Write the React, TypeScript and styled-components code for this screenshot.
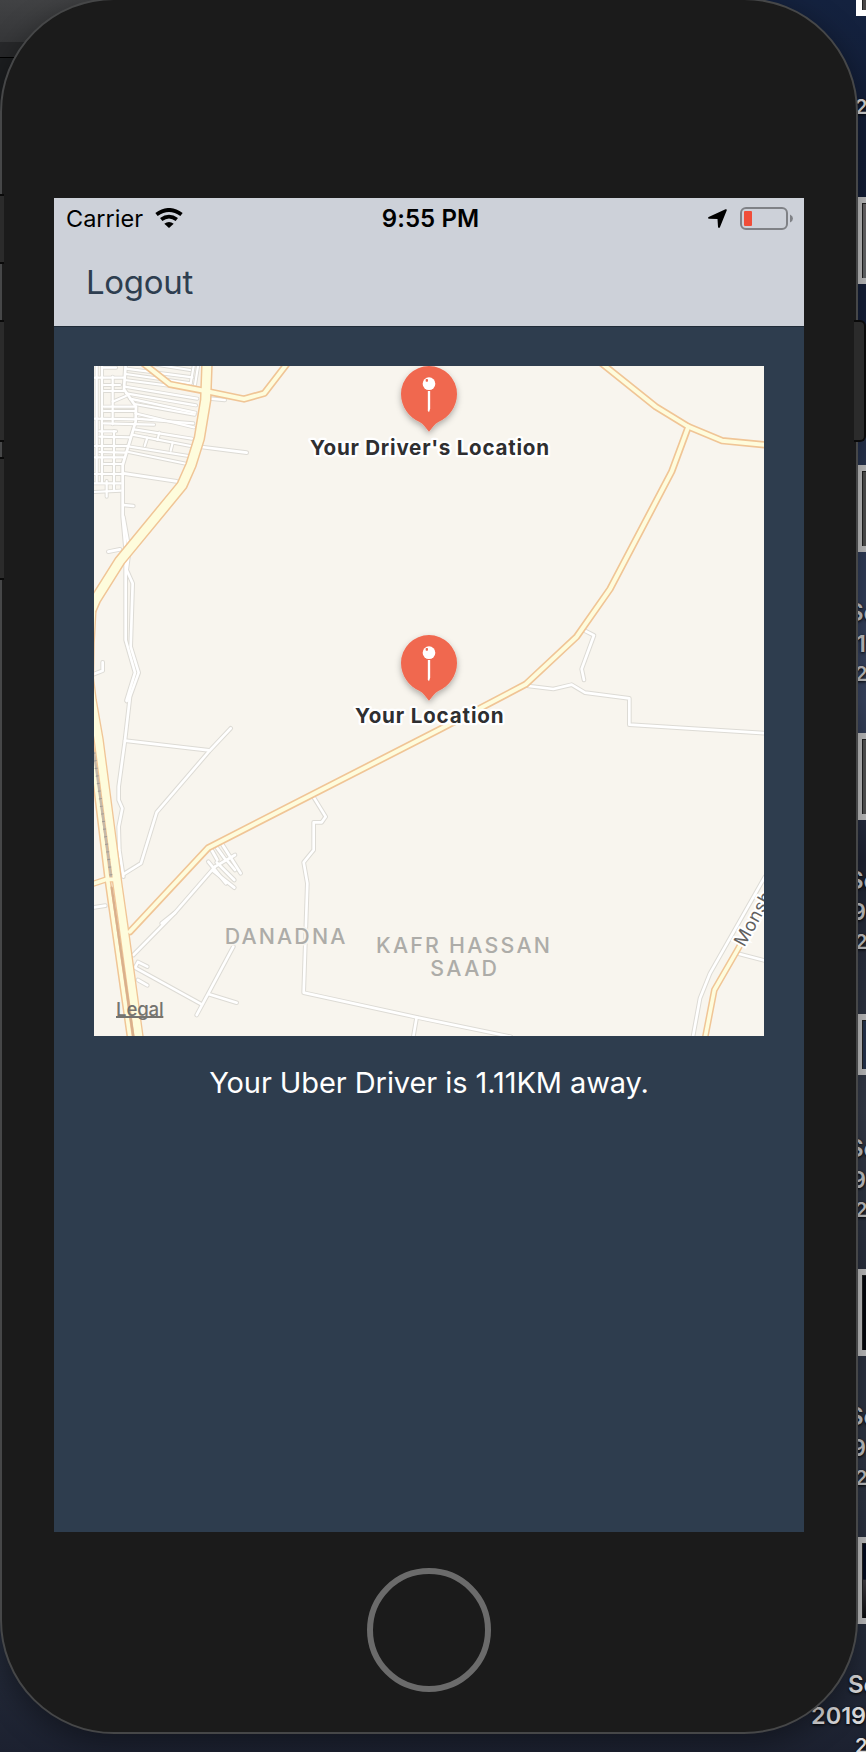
import React from "react";
import styled, { createGlobalStyle } from "styled-components";

const GlobalStyle = createGlobalStyle`
  * { box-sizing: border-box; }
  body {
    margin: 0;
    font-family: Inter, "Liberation Sans", sans-serif;
    -webkit-font-smoothing: antialiased;
  }
`;

/* Every layer of the desktop shares the single grid cell and stacks in order */
const Desktop = styled.div`
  display: grid;
  grid-template: 1752px / 866px;
  width: 866px;
  height: 1752px;
  overflow: hidden;
  background: linear-gradient(
    180deg,
    #14223f 0,
    #131d36 150px,
    #16203a 350px,
    #2b3854 480px,
    #3a4663 700px,
    #1e2333 860px,
    #2a303f 960px,
    #363c4a 1110px,
    #292f3e 1280px,
    #2f3645 1460px,
    #262d3c 1620px,
    #1c2130 1752px
  );

  & > * {
    grid-area: 1 / 1;
    align-self: start;
  }
`;

/* Edge of the dark editor window that sits under the phone */
const EditorWindow = styled.div`
  width: 200px;
  height: 820px;
  background: #1c1e20;
`;

const EditorTitle = styled.div`
  height: 42px;
  background: linear-gradient(#414244, #363739);
`;

const EditorTabs = styled.div`
  height: 16px;
  background: #27282a;
  border-bottom: 1px solid #000;
`;

const FileColumn = styled.aside`
  justify-self: end;
  width: 60px;
  margin-top: -71px;
  display: flex;
  flex-direction: column;
`;

const FileItem = styled.div`
  height: 268px;
  flex: none;
  display: flex;
  flex-direction: column;
`;

const ThumbArea = styled.div`
  height: 87px;
  margin-bottom: 45px;
  padding-left: 50px;
  display: flex;
  align-items: center;
`;

const Thumb = styled.div<{ $h: number; $fill: string; $bright?: boolean }>`
  flex: none;
  width: 90px;
  height: ${(p) => p.$h}px;
  border: 6px solid ${(p) => (p.$bright ? "#fff" : "#c4c4c5")};
  background: ${(p) => p.$fill};
  box-shadow: inset 1px 1px 0 #222;
`;

const FileLabel = styled.span<{ $indent: number; $size: number; $bright?: boolean }>`
  padding-left: ${(p) => p.$indent}px;
  line-height: 31px;
  font-size: ${(p) => p.$size}px;
  font-weight: 600;
  color: ${(p) => (p.$bright ? "#d8d8da" : "#c6c7ca")};
  text-shadow: 0 1px 3px #000;
  white-space: nowrap;
  min-height: 31px;
`;

const Phone = styled.main`
  margin-top: -2px;
  width: 858px;
  height: 1736px;
  border: 2px solid #464748;
  border-radius: 114px;
  background: #1b1b1b;
  box-shadow: 0 8px 30px rgba(0, 0, 0, 0.4);
  padding-top: 198px;
  display: flex;
  flex-direction: column;
  align-items: center;
`;

const LeftKeys = styled.div`
  width: 4px;
  padding-top: 194px;
  display: flex;
  flex-direction: column;
`;

const RightKeys = styled.div`
  justify-self: end;
  width: 12px;
  padding-top: 320px;
  display: flex;
  flex-direction: column;
`;

const SideKey = styled.div<{ $h: number; $after?: number }>`
  height: ${(p) => p.$h}px;
  margin-bottom: ${(p) => p.$after ?? 0}px;
  background: #2b2b2b;
  border: solid #0a0a0a;
  border-width: 2px 0;
`;

const PowerKey = styled(SideKey)`
  border-width: 2px 2px 2px 0;
  border-radius: 0 6px 6px 0;
`;

const Screen = styled.section`
  width: 750px;
  height: 1334px;
  background: #2e3d4e;
  display: flex;
  flex-direction: column;
`;

const Header = styled.header`
  height: 129px;
  background: #cdd1d9;
  border-bottom: 1px solid #1f2b38;
`;

const StatusBar = styled.div`
  height: 40px;
  padding: 0 11px 0 12px;
  display: grid;
  grid-template-columns: 1fr auto 1fr;
  align-items: center;
  color: #000;
  font-size: 23.5px;
`;

const StatusLeft = styled.div`
  display: flex;
  align-items: center;
  gap: 12px;
  letter-spacing: 0;
`;

const Clock = styled.time`
  margin-left: 2px;
  font-size: 24px;
  font-weight: 600;
  letter-spacing: 0.1px;
`;

const StatusRight = styled.div`
  display: flex;
  align-items: center;
  justify-content: flex-end;
  gap: 13px;
`;

const NavBar = styled.nav`
  height: 88px;
  padding-left: 32px;
  display: flex;
  align-items: center;
`;

const LogoutButton = styled.button`
  border: 0;
  padding: 0;
  background: none;
  font-family: inherit;
  font-size: 33px;
  line-height: 40px;
  letter-spacing: -0.3px;
  color: #2e3e50;
`;

const Content = styled.div`
  flex: 1;
  padding: 39px 40px 0;
  display: flex;
  flex-direction: column;
  align-items: center;
`;

const MapSvg = styled.svg`
  display: block;
  width: 670px;
  height: 670px;
  background: #f8f5ee;
  font-family: Inter, "Liberation Sans", sans-serif;
`;

const Distance = styled.p`
  margin: 25px 0 0;
  font-size: 29px;
  line-height: 44px;
  letter-spacing: -0.08px;
  color: #fff;
  white-space: nowrap;
`;

const HomeButton = styled.div`
  margin-top: 36px;
  width: 124px;
  height: 124px;
  border: 6px solid #6b6b6b;
  border-radius: 50%;
`;

/* Map geometry uses three units per pixel */
const lanes: string[] = [
  "95,-5 90,70 126,122 125,167 86,297 86,452 95,552 95,822 123,920 98,1002",
  "88,452 106,552 98,612 116,652 110,842 134,920 108,992 93,1122 74,1262 74,1302 85,1327 74,1382 76,1452 88,1532",
  "108,990 98,1005",
  "93,1124 346,1153",
  "410,1087 346,1155 188,1339 141,1492 88,1525",
  "363,1502 243,1640 203,1672",
  "243,1640 118,1767",
  "160,1802 132,1788 123,1805 323,1915",
  "160,1858 132,1842",
  "308,1947 343,1882 418,1742",
  "343,1884 428,1910",
  "353,1452 370,1482",
  "370,1447 393,1479",
  "386,1437 440,1522",
  "363,1502 423,1467",
  "343,1487 396,1552",
  "358,1515 421,1565",
  "368,1489 421,1542",
  "398,1482 423,1512",
  "658,1292 695,1352 683,1369 659,1369 659,1452 629,1489 640,1552 629,1880 968,1954 1250,2012",
  "968,1954 958,2012",
  "1468,792 1500,808 1463,909 1470,942",
  "1303,960 1378,969 1433,956 1473,980 1606,997 1606,1076 2018,1102",
  "2013,1532 1848,1822 1818,1897 1796,2017",
  "1928,1762 2013,1784",
  "88,417 118,420",
  "43,557 78,550",
  "0,924 26,914 26,889",
  "88,322 248,346",
  "323,243 458,260",
  "330,96 392,102",
  "0,1624 34,1619",
];

const blocks: string[] = [
  "8,-5 8,350",
  "24,-5 24,350",
  "56,32 56,175",
  "60,195 60,375",
  "38,345 38,392",
  "24,5 66,5",
  "0,35 92,35",
  "30,57 78,57",
  "30,75 90,75",
  "56,107 96,90",
  "30,122 122,122",
  "30,135 125,135",
  "0,158 125,160",
  "30,172 180,176",
  "16,196 66,196",
  "16,212 110,214",
  "0,240 102,240",
  "16,258 95,260",
  "0,274 90,274",
  "30,294 86,294",
  "0,324 84,324",
  "0,352 80,352",
  "0,378 80,374",
  "96,8 295,34",
  "96,24 290,52",
  "92,42 310,70",
  "92,62 310,98",
  "96,82 306,118",
  "108,98 304,140",
  "122,114 302,146",
  "124,142 300,184",
  "126,158 298,172",
  "120,190 294,218",
  "114,206 290,240",
  "108,242 284,270",
  "104,258 280,294",
  "160,215 152,240",
  "196,200 190,222",
  "236,230 230,254",
  "300,-5 290,52",
  "313,-5 303,56",
  "180,-5 288,12",
];

type Road = { d: string; outer: number; inner: number };

const highways: Road[] = [
  { d: "148,-8 228,55 338,76 450,99 511,82 580,-8", outer: 22, inner: 12 },
  { d: "1523,-8 1685,122 1783,182 1884,224 2018,237", outer: 22, inner: 12 },
  { d: "1783,182 1733,317 1548,669 1448,812 1295,955 1038,1090 343,1445 108,1697", outer: 22, inner: 12 },
  { d: "2015,1600 1933,1747 1861,1872 1833,2017", outer: 20, inner: 11 },
  { d: "-8,1555 38,1540 60,1540", outer: 19, inner: 11 },
  { d: "-10,1130 2,1222 41,1542 108,2015", outer: 20, inner: 11 },
  { d: "339,-8 335,102 316,217 291,297 264,358 78,584 5,700 -30,780", outer: 35, inner: 26 },
  { d: "-8,740 -13,830 -15,937 -7,1002 14,1122 70,1552 87,1672 134,2015", outer: 31, inner: 23 },
];

const Pin = ({ y }: { y: number }) => (
  <g transform={`translate(1005 ${y})`}>
    <path
      d="M0,-84 A84,84 0 0 1 84,0 C84,38 60,70 28,84 C17,90 9,102 0,113 C-9,102 -17,90 -28,84 C-60,70 -84,38 -84,0 A84,84 0 0 1 0,-84Z"
      fill="#f06850"
      filter="url(#pinShadow)"
    />
    <circle cy="-31" r="19" fill="#fff" />
    <rect x="-10" y="-45" width="7" height="8" rx="2" fill="#f06850" />
    <path d="M-3.5,-9 H3.5 V44 L0,55 L-3.5,50Z" fill="#fff" />
  </g>
);

const MapView = () => (
  <MapSvg viewBox="0 0 2010 2010" role="img" aria-label="Driver map">
    <defs>
      <filter id="pinShadow" x="-30%" y="-30%" width="160%" height="160%">
        <feDropShadow dx="0" dy="9" stdDeviation="10" floodColor="#000" floodOpacity="0.3" />
      </filter>
    </defs>
    <g fill="none" strokeLinejoin="round" strokeLinecap="round">
      <g stroke="#dddbd5">
        {blocks.map((d) => <polyline key={d} points={d} strokeWidth="12" />)}
        {lanes.map((d) => <polyline key={d} points={d} strokeWidth="14" />)}
      </g>
      <g stroke="#fff">
        {blocks.map((d) => <polyline key={d} points={d} strokeWidth="6.5" />)}
        {lanes.map((d) => <polyline key={d} points={d} strokeWidth="8" />)}
      </g>
      {highways.map((r) => <polyline key={r.d} points={r.d} stroke="#f0c596" strokeWidth={r.outer} />)}
      {highways.map((r) => <polyline key={r.d} points={r.d} stroke="#fefcdc" strokeWidth={r.inner} />)}
      <polyline points="0,1160 51,1530" stroke="#c4b8a8" strokeWidth="7" />
      <polyline points="0,1160 51,1530" stroke="#a09a93" strokeWidth="9" strokeDasharray="3 20" strokeLinecap="butt" />
      <polyline points="53,1565 118,2012" stroke="#d9b08c" strokeWidth="7" />
    </g>
    <Pin y={84} />
    <Pin y={891} />
    <g fill="#2f2f31" fontSize="62" fontWeight="650" stroke="#fff" strokeWidth="14" strokeLinejoin="round" paintOrder="stroke">
      <text x="648" y="268" textLength="717">Your Driver's Location</text>
      <text x="783" y="1072" textLength="446">Your Location</text>
    </g>
    <g fill="#adaca8" fontSize="64" fontWeight="550" stroke="#f8f5ee" strokeWidth="10" paintOrder="stroke">
      <text x="392" y="1735" textLength="362">DANADNA</text>
      <text x="846" y="1761" textLength="522">KAFR HASSAN</text>
      <text x="1009" y="1831" textLength="200">SAAD</text>
    </g>
    <text
      transform="translate(1951 1745) rotate(-61)"
      fill="#60605e"
      fontSize="54"
      letterSpacing="1"
      stroke="#fff"
      strokeWidth="12"
      paintOrder="stroke"
    >
      Monsh
    </text>
    <text x="66" y="1950" fill="#757470" fontSize="56" fontWeight="550" textLength="143">Legal</text>
    <rect x="66" y="1950" width="142" height="6" fill="#757470" />
  </MapSvg>
);

const WifiIcon = () => (
  <svg width="28" height="20" viewBox="0 0 28 20" fill="none" stroke="#000" strokeWidth="4">
    <path d="M1.5,6.5 Q14,-2.5 26.5,6.5" />
    <path d="M6.2,11.6 Q14,5.6 21.8,11.6" strokeWidth="3.8" />
    <path d="M9.3,15.8 Q14,12 18.7,15.8 L14,20Z" fill="#000" stroke="none" />
  </svg>
);

const ArrowIcon = () => (
  <svg width="19" height="19" viewBox="0 0 18 18">
    <path d="M0.6,7.6 L16.6,0.3 Q18.2,-0.1 17.7,1.5 L11.4,17 Q10.4,18.8 9.5,17 L9,9.4 L1,9.2 Q-0.7,8.7 0.6,7.6Z" fill="#000" />
  </svg>
);

const BatteryIcon = () => (
  <svg width="53" height="23" viewBox="0 0 53 23">
    <rect x="1" y="1" width="46" height="21" rx="5" fill="none" stroke="#7f8186" strokeWidth="2" />
    <rect x="4" y="4" width="8" height="15" rx="1" fill="#f04d39" />
    <path d="M50,7.5 Q53,9 53,11.5 Q53,14 50,15.5Z" fill="#7f8186" />
  </svg>
);

type Line = { text: string; indent: number; size: number };

const name: Line = { text: "Sc", indent: 42, size: 24 };
const date: Line = { text: "2019", indent: 5, size: 23.5 };
const time: Line = { text: "2", indent: 49, size: 20 };
const blank: Line = { text: "", indent: 0, size: 20 };

type DesktopFile = { id: string; h: number; fill: string; lines: Line[]; bright?: boolean };

const files: DesktopFile[] = [
  { id: "a", h: 87, fill: "#4a4747", lines: [blank, time], bright: true },
  { id: "b", h: 87, fill: "linear-gradient(#6b6769, #66696c)", lines: [] },
  { id: "c", h: 87, fill: "#505050", lines: [name, { text: "19", indent: 50, size: 23.5 }, time] },
  { id: "d", h: 87, fill: "#555", lines: [name, date, time] },
  { id: "e", h: 61, fill: "#26344f", lines: [name, date, time] },
  { id: "f", h: 87, fill: "#05070e", lines: [name, date, time] },
  {
    id: "g",
    h: 87,
    fill: "linear-gradient(#030b20 48%, #403c42 50%, #0c0c10)",
    lines: [name, date, time],
  },
];

export default function App() {
  return (
    <Desktop>
      <GlobalStyle />
      <EditorWindow>
        <EditorTitle />
        <EditorTabs />
      </EditorWindow>
      <FileColumn>
        {files.map((f) => (
          <FileItem key={f.id}>
            <ThumbArea>
              <Thumb $h={f.h} $fill={f.fill} $bright={f.bright} />
            </ThumbArea>
            {f.lines.map((l, i) => (
              <FileLabel key={i} $indent={l.indent} $size={l.size} $bright={f.bright || f.id === "g"}>
                {l.text}
              </FileLabel>
            ))}
          </FileItem>
        ))}
      </FileColumn>
      <Phone>
        <Screen>
          <Header>
            <StatusBar>
              <StatusLeft>
                Carrier
                <WifiIcon />
              </StatusLeft>
              <Clock>9:55 PM</Clock>
              <StatusRight>
                <ArrowIcon />
                <BatteryIcon />
              </StatusRight>
            </StatusBar>
            <NavBar>
              <LogoutButton>Logout</LogoutButton>
            </NavBar>
          </Header>
          <Content>
            <MapView />
            <Distance>Your Uber Driver is 1.11KM away.</Distance>
          </Content>
        </Screen>
        <HomeButton />
      </Phone>
      <LeftKeys>
        <SideKey $h={70} $after={56} />
        <SideKey $h={122} $after={15} />
        <SideKey $h={123} />
      </LeftKeys>
      <RightKeys>
        <PowerKey $h={122} />
      </RightKeys>
    </Desktop>
  );
}
